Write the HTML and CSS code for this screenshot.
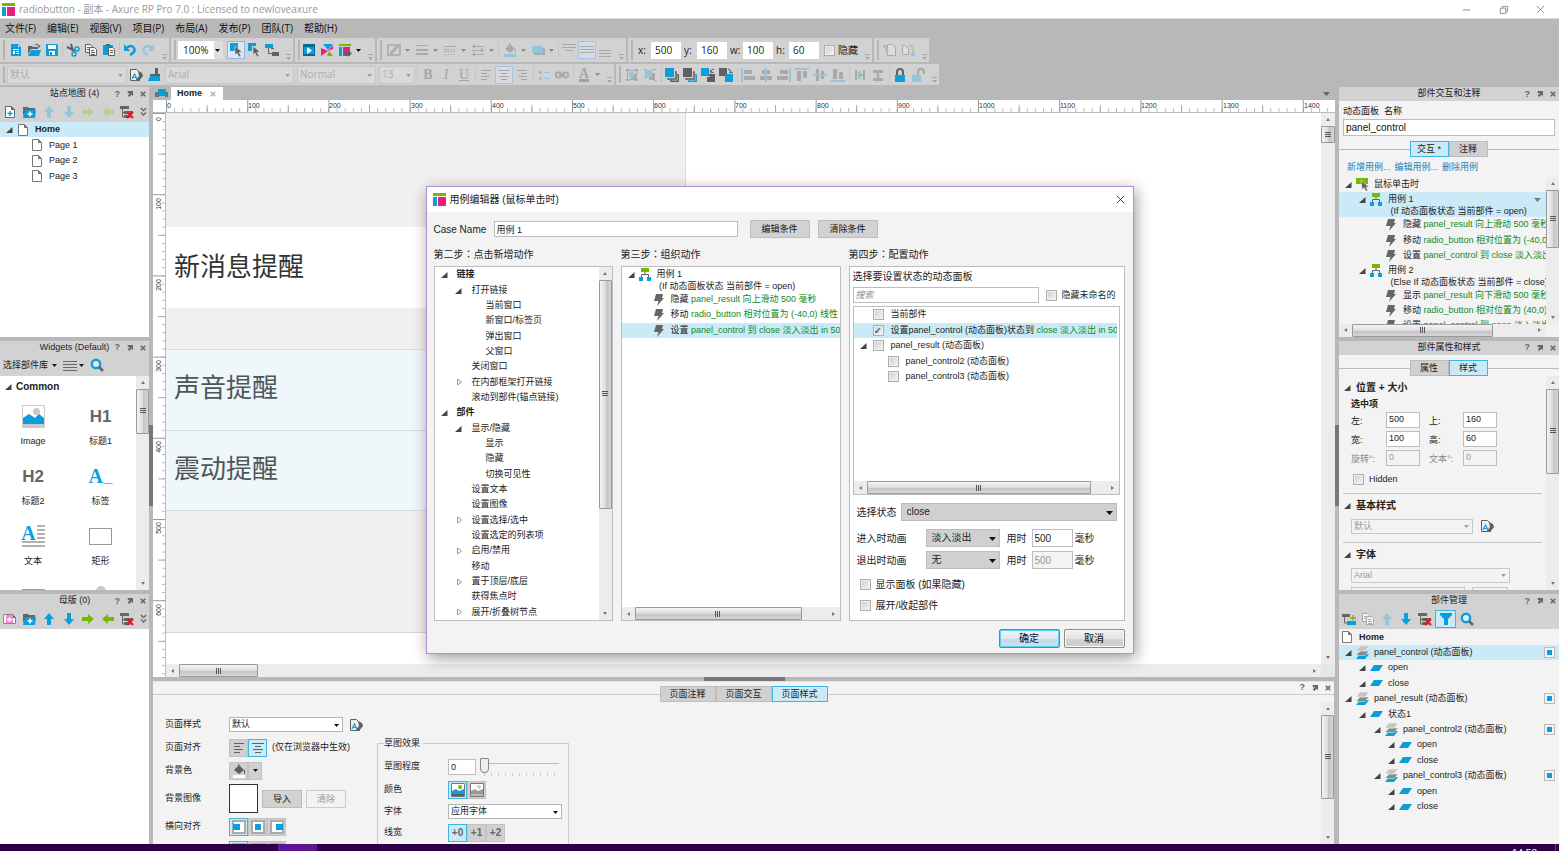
FILE: index.html
```html
<!DOCTYPE html>
<html lang="zh-CN">
<head>
<meta charset="utf-8">
<title>radiobutton - 副本 - Axure RP Pro 7.0</title>
<link rel="stylesheet" href="styles.css">
</head>
<body>
<svg class="sprite" aria-hidden="true">
  <symbol id="logo" viewBox="0 0 13 13"><path fill="#76b900" d="M0 0h13v3H0z"/><path fill="#0a9fdc" d="M0 4h4v9H0z"/><path fill="#ef1a86" d="M5 4h8v9H5z"/></symbol>
  <symbol id="new" viewBox="0 0 14 14"><path fill="var(--b)" d="M2 1h7l3 3v9H2z"/><path fill="#fff" d="M4 6h6v1H4zM4 8h2v3H4zM7 8h3v1H7zM7 10h3v1H7zM9 2l2 2H9z"/></symbol>
  <symbol id="open" viewBox="0 0 14 14"><path fill="var(--g)" d="M1 3h4l1 1h5v2H4l-3 5z"/><path fill="var(--b)" d="M4 7h10l-2 6H1z"/><path fill="none" stroke="var(--g)" d="M8 2q3-2 4 1"/><path fill="var(--g)" d="M10.500 2.500h3L12 5z"/></symbol>
  <symbol id="save" viewBox="0 0 14 14"><path fill="var(--b)" d="M1 1h11l1 1v11H1z"/><path fill="#fff" d="M3 2h8v4H3zM4 8h6v4H4z"/><path fill="var(--b)" d="M5 9h2v3H5z"/></symbol>
  <symbol id="cut" viewBox="0 0 14 14"><path stroke="var(--g)" stroke-width="2" fill="none" d="M1 4l8 4M5 1l2 7"/><g fill="none" stroke="var(--b)" stroke-width="1.500"><circle cx="11" cy="6" r="2"/><circle cx="8" cy="11" r="2"/></g></symbol>
  <symbol id="copy" viewBox="0 0 14 14"><g fill="#f3f3f3" stroke="var(--g)"><path d="M1.500 1.500h5l2 2v6h-7z"/><path d="M5.500 4.500h5l2 2v6h-7z"/></g><path stroke="var(--g)" d="M7 7.500h3M7 9.500h4M7 11.500h4M3 4.500h2M3 6.500h2"/></symbol>
  <symbol id="paste" viewBox="0 0 14 14"><path fill="var(--b)" d="M1 2h10v10H1z"/><path fill="var(--g)" d="M4 1h4v2H4z"/><path fill="#f3f3f3" stroke="var(--g)" d="M6.500 4.500h4l2 2v6h-6z"/><path stroke="var(--g)" d="M8 7.500h3M8 9.500h3"/></symbol>
  <symbol id="undo" viewBox="0 0 14 14"><path fill="none" stroke="var(--b)" stroke-width="2.500" d="M3 5q6-4 8 0t-4 7"/><path fill="var(--b)" d="M1 1v7h6z"/></symbol>
  <symbol id="redo" viewBox="0 0 14 14"><path fill="none" stroke="var(--b)" stroke-width="2.500" d="M11 5Q5 1 3 5t4 7"/><path fill="var(--b)" d="M13 1v7H7z"/></symbol>
  <symbol id="caret" viewBox="0 0 7 4"><path d="M0 0h7L3.500 4z"/></symbol>
  <symbol id="more" viewBox="0 0 6 6"><path fill="#a5a5a5" d="M1 0h5v1H1zM1 3h5L3.500 6z"/></symbol>
  <symbol id="pointer" viewBox="0 0 14 14"><path fill="var(--b)" d="M1 0h8v8H1z"/><path fill="var(--g)" stroke="#e0e0e0" stroke-width=".6" d="M6 3l7 6-3 .300 2 3.700-2 1-2-4-2 2z"/></symbol>
  <symbol id="pointer2" viewBox="0 0 14 14"><path fill="var(--b)" d="M1 0h8v3H5v5H1z"/><path fill="var(--g)" stroke="#e0e0e0" stroke-width=".6" d="M6 3l7 6-3 .300 2 3.700-2 1-2-4-2 2z"/></symbol>
  <symbol id="connector" viewBox="0 0 14 14"><path fill="var(--b)" d="M0 1h8v4H0z"/><path fill="none" stroke="var(--g)" d="M3.500 5v5.500H7M6 5.500h3"/><path fill="var(--g)" d="M7 9h7v4H7z"/></symbol>
  <symbol id="play" viewBox="0 0 14 14"><path fill="#056a93" d="M1 1h12v12H1z"/><path fill="var(--b)" d="M2 4h10v7H2z"/><path fill="#fff" d="M5 4l5 3.500L5 11z"/></symbol>
  <symbol id="share" viewBox="0 0 14 14"><path fill="var(--b)" d="M3 1h10l-5 6z"/><path fill="#ef1a86" d="M1 5l7 3-7 5z"/><path fill="#76b900" d="M9 8l4 5H7z"/><path fill="#ef1a86" d="M8 8l5-6v4z"/></symbol>
  <symbol id="publish" viewBox="0 0 14 14"><path fill="#76b900" d="M1 1h12v2H1z"/><path fill="var(--b)" d="M1 4h3v9H1z"/><path fill="#ef1a86" d="M5 4h7v9H5z"/><path fill="var(--g)" d="M6 9h4V7l4 3.500-4 3.500v-2H6z"/></symbol>
  <symbol id="pen" viewBox="0 0 14 14"><path fill="none" stroke="var(--g)" stroke-width="1.500" d="M1 2h12v10H1z"/><path stroke="var(--g)" stroke-width="2.500" d="M4 10l7-7"/><path fill="var(--g)" d="M2 12l2-3 2 2z"/></symbol>
  <symbol id="lines" viewBox="0 0 14 14"><path fill="var(--g)" d="M1 2h12v1H1zM1 6h12v2H1zM1 10h12v2H1z"/></symbol>
  <symbol id="dashes" viewBox="0 0 14 14"><path fill="none" stroke="var(--g)" d="M1 3.500h12"/><path fill="none" stroke="var(--g)" stroke-dasharray="2 1" d="M1 6.500h12M1 8.500h12"/><path fill="none" stroke="var(--g)" stroke-dasharray="1 1" d="M1 11.500h12"/></symbol>
  <symbol id="arrows" viewBox="0 0 14 14"><path stroke="var(--g)" d="M2 3.500h11M1 7.500h11M2 11.500h11"/><path fill="var(--g)" d="M4 1v5L1 3.500zM10 5v5l3-2.500zM4 9v5l-3-2.500z"/></symbol>
  <symbol id="fill" viewBox="0 0 14 14"><path fill="var(--g)" d="M7 1l5 5-5 4-5-4z"/><path stroke="var(--g)" fill="none" d="M6.500 0v5M12.500 6v4"/><path fill="var(--fill,var(--b))" d="M1 11h12v3H1z"/></symbol>
  <symbol id="shade" viewBox="0 0 14 14"><path fill="#aaa" d="M3 5h11v7H3z"/><path fill="var(--b)" d="M1 3h11v7H1z"/></symbol>
  <symbol id="vtop" viewBox="0 0 14 14"><path fill="var(--g)" d="M0 1h14v1H0zM0 4h14v1H0zM3 7h8v1H3z"/></symbol>
  <symbol id="vmid" viewBox="0 0 14 14"><path fill="var(--g)" d="M0 3h14v1H0zM0 6h14v1H0zM0 9h14v1H0z"/></symbol>
  <symbol id="vbot" viewBox="0 0 14 14"><path fill="var(--g)" d="M1 7h12v1H1zM1 10h12v1H1zM1 13h12v1H1z"/></symbol>
  <symbol id="cin" viewBox="0 0 14 14"><path fill="#ddd" stroke="var(--g)" d="M4.500 1.500h5l3 3v8h-8z"/><path fill="var(--b)" d="M0 2h4v4h2l-3 4-1-5H0z"/></symbol>
  <symbol id="cout" viewBox="0 0 14 14"><path fill="#ddd" stroke="var(--g)" d="M1.500 2.500h3l3 3v6h-6z"/><path stroke="#b9cc83" stroke-width="2" fill="none" d="M8 2q4 0 4 6"/><path fill="var(--b)" d="M12 8l2.500 3L12 14l-2.500-3z"/></symbol>
  <symbol id="styleedit" viewBox="0 0 14 14"><path fill="#eee" stroke="var(--g)" d="M1.500 1.500h6l3 3v8h-9z"/><path fill="var(--g)" d="M9 3l4 2 1 3-4 5H6l4-5z"/><path fill="none" stroke="#0a9fdc" stroke-width="1.200" d="M3 11l2.500-5L8 11M4 9.500h3"/></symbol>
  <symbol id="brush" viewBox="0 0 14 14"><path fill="var(--g)" d="M8 0h3v6H8zM3 6h10v2H3z"/><path fill="#0a9fdc" d="M3 8h10v5H1z"/></symbol>
  <symbol id="aleft" viewBox="0 0 14 14"><path fill="var(--g)" d="M2 2h10v1H2zM2 5h6v1H2zM2 8h9v1H2zM2 11h6v1H2z"/></symbol>
  <symbol id="acenter" viewBox="0 0 14 14"><path fill="var(--g)" d="M1 2h12v1H1zM4 5h6v1H4zM2 8h10v1H2zM4 11h6v1H4z"/></symbol>
  <symbol id="aright" viewBox="0 0 14 14"><path fill="var(--g)" d="M2 2h10v1H2zM6 5h6v1H6zM3 8h9v1H3zM6 11h6v1H6z"/></symbol>
  <symbol id="bullets" viewBox="0 0 14 14"><path fill="var(--b)" d="M2 3h3v3H2zM2 9h3v3H2z"/><path fill="var(--b)" d="M7 4h6v1H7zM7 10h6v1H7z"/></symbol>
  <symbol id="link" viewBox="0 0 14 14"><g fill="none" stroke="var(--g)" stroke-width="2"><rect x="1" y="4.500" width="5" height="5" rx="2"/><rect x="8" y="4.500" width="5" height="5" rx="2"/><path d="M4 7h6"/></g></symbol>
  <symbol id="group" viewBox="0 0 14 14"><path fill="none" stroke="var(--g)" d="M2.500 2.500h9v9h-9z"/><path fill="var(--b)" d="M4 4h5v5H4z"/><path fill="var(--g)" d="M9 6v3H6v2h5V6zM1 1h3v2H1zM10 1h3v2h-3zM1 11h3v2H1zM10 11h3v2h-3z"/></symbol>
  <symbol id="ungroup" viewBox="0 0 14 14"><path fill="var(--b)" d="M2 2h7v7H2z"/><path fill="var(--g)" d="M9 5h3v7H6V9h3zM1 1h3v1H1zM9 1h4v1H9zM1 9h3v1H1zM11 12h3v1h-3z"/></symbol>
  <symbol id="front" viewBox="0 0 14 14"><path fill="var(--b)" d="M0 0h9v9H0z"/><path fill="none" stroke="var(--g)" stroke-width="1.500" d="M10 4h1v7H3v-1M12 7h1.200v6.200H6v-1.200"/></symbol>
  <symbol id="back" viewBox="0 0 14 14"><path fill="var(--g)" d="M0 0h9v9H0z"/><path fill="none" stroke="var(--g)" stroke-width="1.500" d="M10 4h1v7H3v-1"/><path fill="none" stroke="var(--b)" stroke-width="1.500" d="M12 7h1.200v6.200H6v-1.200"/></symbol>
  <symbol id="fwd" viewBox="0 0 14 14"><path fill="var(--b)" d="M0 0h8v8H0z"/><path fill="var(--g)" d="M7 6h7v8H6V9h3z"/><path stroke="var(--g)" fill="none" d="M13 1q-3 0-3 3M9 2l1 3 3-1"/></symbol>
  <symbol id="bwd" viewBox="0 0 14 14"><path fill="var(--g)" d="M0 0h8v8H0z"/><path fill="var(--b)" d="M6 6h8v8H6z"/><path stroke="var(--g)" fill="none" d="M9 1q3 0 3 4M10 4l2 1 2-1"/></symbol>
  <symbol id="alL" viewBox="0 0 14 14"><path fill="var(--b)" d="M0 0h2v14H0z"/><path fill="var(--g)" d="M3 2h8v4H3zM3 8h11v4H3z"/></symbol>
  <symbol id="alC" viewBox="0 0 14 14"><path fill="var(--g)" d="M3 2h8v4H3zM1 8h12v4H1z"/><path fill="var(--b)" d="M6 0h2v14H6z"/></symbol>
  <symbol id="alR" viewBox="0 0 14 14"><path fill="var(--b)" d="M12 0h2v14h-2z"/><path fill="var(--g)" d="M3 2h8v4H3zM0 8h11v4H0z"/></symbol>
  <symbol id="alT" viewBox="0 0 14 14"><path fill="var(--b)" d="M0 0h14v2H0z"/><path fill="var(--g)" d="M2 3h4v10H2zM8 3h4v7H8z"/></symbol>
  <symbol id="alM" viewBox="0 0 14 14"><path fill="var(--g)" d="M3 1h3v12H3zM8 3h3v8H8z"/><path fill="var(--b)" d="M0 6h14v2H0z"/></symbol>
  <symbol id="alB" viewBox="0 0 14 14"><path fill="var(--b)" d="M0 12h14v2H0z"/><path fill="var(--g)" d="M2 1h4v10H2zM8 4h4v7H8z"/></symbol>
  <symbol id="diH" viewBox="0 0 14 14"><path fill="var(--g)" d="M2 2h2v10H2zM10 2h2v10h-2zM5 4h2v6H5zM7 6h4v2H7z"/><path fill="var(--b)" d="M6 3h2v8H6z"/></symbol>
  <symbol id="diV" viewBox="0 0 14 14"><path fill="var(--g)" d="M2 2h10v3H2zM2 10h10v3H2zM6 4h2v8H6z"/><path fill="var(--b)" d="M4 7h6v1H4z"/></symbol>
  <symbol id="lock" viewBox="0 0 14 14"><path fill="none" stroke="var(--g)" stroke-width="2" d="M4 7V4q0-3 3-3t3 3v3"/><path fill="var(--b)" d="M2 7h10v7H2z"/></symbol>
  <symbol id="unlock" viewBox="0 0 14 14"><path fill="none" stroke="var(--g)" stroke-width="2" d="M7 7V4q0-3 3-3t3 3v2"/><path fill="var(--b)" d="M1 7h9v7H1z"/></symbol>
  <symbol id="pop" viewBox="0 0 8 8"><path fill="#666" d="M1 0h7v7L6 5 3 8 1 6l3-3H1z"/></symbol>
  <symbol id="x" viewBox="0 0 8 8"><path stroke="#666" stroke-width="2" d="M1 1l6 6M7 1L1 7"/></symbol>
  <symbol id="addpage" viewBox="0 0 14 14"><path fill="#fff" stroke="#666" d="M2.500 1.500h6l3 3v8h-9z"/><path fill="#666" d="M8 1l4 4H8z"/><path stroke="#0a9fdc" stroke-width="1.500" d="M4.500 8.500h5M7 6v5"/></symbol>
  <symbol id="addmaster" viewBox="0 0 14 14"><path fill="#fff" stroke="#888" d="M.500 2.500h9l3 3v6H.500z"/><path fill="#666" d="M9 2l4 4H9z"/><path fill="#f48ad0" d="M3 3h7v8H3z"/><path stroke="#fff" stroke-width="1.500" d="M4 7.500h5M6.500 5v5"/></symbol>
  <symbol id="addfolder" viewBox="0 0 14 14"><path fill="#666" d="M1 2h5l1 1h6v3H1z"/><path fill="#0a9fdc" d="M3 5h11l-1 8H1z"/><path fill="#666" d="M1 4h2v3L1 11z"/><path stroke="#fff" stroke-width="1.500" d="M5.500 9h5M8 6.500v5"/></symbol>
  <symbol id="up" viewBox="0 0 14 14"><path fill="var(--b)" d="M7 1l5 6H9v6H5V7H2z"/></symbol>
  <symbol id="down" viewBox="0 0 14 14"><path fill="var(--b)" d="M7 13l5-6H9V1H5v6H2z"/></symbol>
  <symbol id="right" viewBox="0 0 14 14"><path fill="var(--n)" d="M13 7L7 2v3H1v4h6v3z"/></symbol>
  <symbol id="left" viewBox="0 0 14 14"><path fill="var(--n)" d="M1 7l6-5v3h6v4H7v3z"/></symbol>
  <symbol id="deltree" viewBox="0 0 14 14"><path fill="#666" d="M0 1h9v3H0zM4 6h9v3H4zM4 10h6v3H4z"/><path fill="none" stroke="#666" d="M2.500 4v8H5M2 7.500h3"/><path stroke="#e01b22" stroke-width="2.200" d="M7 7l6 6M13 7l-6 6"/></symbol>
  <symbol id="chev" viewBox="0 0 8 10"><path fill="none" stroke="#666" stroke-width="1.600" d="M1 1l3 3 3-3M1 6l3 3 3-3"/></symbol>
  <symbol id="page" viewBox="0 0 10 12"><path fill="#fff" stroke="#777" d="M.500.500h6l3 3v8h-9z"/><path fill="#777" d="M6 0l4 4H6z"/></symbol>
  <symbol id="tri" viewBox="0 0 7 7"><path fill="#444" d="M6.500 1v6H0z"/></symbol>
  <symbol id="tric" viewBox="0 0 7 8"><path fill="#fff" stroke="#999" d="M1.500 1l4 3-4 3z"/></symbol>
  <symbol id="case" viewBox="0 0 12 13"><path fill="#76b900" d="M2 0h8v4H2z"/><path fill="none" stroke="#666" d="M6 4v3M2.500 9V6.500h7V9"/><path fill="#0a9fdc" d="M0 9h4v4H0zM8 9h4v4H8z"/></symbol>
  <symbol id="click" viewBox="0 0 13 13"><path fill="#76b900" d="M0 0h12v6H0z"/><path fill="#666" stroke="#f3f3f3" stroke-width=".6" d="M5 2l8 7-3 .300 2 3-2 1-2-3.500-2 2z"/></symbol>
  <symbol id="bolt" viewBox="0 0 10 12"><path fill="#666" d="M2 0h7L8 4h2L3 12l1.500-5H0z"/></symbol>
  <symbol id="search" viewBox="0 0 14 14"><circle cx="6" cy="6" r="4.200" fill="#fff" fill-opacity=".5" stroke="#0a9fdc" stroke-width="2.400"/><path stroke="#666" stroke-width="2.600" d="M9 9l4 4"/></symbol>
  <symbol id="menu" viewBox="0 0 14 14"><path fill="#666" d="M0 3h14v1H0zM0 6h14v1H0zM0 9h14v1H0zM0 12h14v1H0z"/></symbol>
  <symbol id="adddiag" viewBox="0 0 14 14"><path fill="#666" d="M0 2h8v3H0z"/><path fill="none" stroke="#666" d="M2.500 5v6H5"/><path fill="#0a9fdc" d="M5 9h9v4H5z"/><path stroke="#76b900" stroke-width="1.500" d="M8 6h6M11 3v5"/></symbol>
  <symbol id="funnel" viewBox="0 0 14 14"><path fill="#0a9fdc" d="M1 1h12v2L9 7v6H5V7L1 3z"/></symbol>
  <symbol id="stack" viewBox="0 0 13 13"><path fill="#0a9fdc" d="M4 8h9l-4 5H0z"/><path fill="#888" d="M4 5h9L9 9.500H0z" stroke="#f3f3f3" stroke-width=".5"/><path fill="#c4c4c4" d="M4 0h9L9 5H0z" stroke="#f3f3f3" stroke-width=".5"/></symbol>
  <symbol id="state" viewBox="0 0 13 6"><path fill="#0a9fdc" d="M4 0h9L9 6H0z"/></symbol>
  <symbol id="diagram" viewBox="0 0 13 10"><path fill="#0a9fdc" d="M3 0h8v7H3z"/><path fill="#4e7f94" d="M0 3h4v5H0zM10 3h3v5h-3z"/></symbol>
  <symbol id="image" viewBox="0 0 23 23"><path fill="#fff" stroke="#c9c9c9" d="M.500.500h22v22H.500z"/><circle cx="14.500" cy="6.500" r="3.500" fill="#c9c9c9"/><path fill="#0a9fdc" d="M1 13l6-4 6 4 4-4 5 4v6H1z"/><path fill="#c9c9c9" d="M1 19h21v4H1z"/></symbol>
  <symbol id="para" viewBox="0 0 23 22"><path fill="#666" d="M15 0h8v1h-8zM15 4h8v1h-8zM15 8h8v1h-8zM15 12h8v1h-8zM0 16h23v1H0zM0 20h23v1H0z"/></symbol>
  <symbol id="pic" viewBox="0 0 14 14"><path fill="#fff" stroke="#777" d="M.500.500h13v13H.500z"/><circle cx="9" cy="4" r="2" fill="var(--n)"/><path fill="var(--b)" d="M1 8l4-2 3 2 5-2v5H1z"/><path fill="var(--g)" d="M1 11h12v2H1z"/></symbol>
  <symbol id="posl" viewBox="0 0 14 14"><path fill="#fff" stroke="#aaa" stroke-width="2" d="M1 1h12v12H1z"/><path fill="#0a9fdc" d="M1 4h7v6H1z"/></symbol>
  <symbol id="posc" viewBox="0 0 14 14"><path fill="#fff" stroke="#aaa" stroke-width="2" d="M1 1h12v12H1z"/><path fill="#0a9fdc" d="M4 4h6v6H4z"/></symbol>
  <symbol id="posr" viewBox="0 0 14 14"><path fill="#fff" stroke="#aaa" stroke-width="2" d="M1 1h12v12H1z"/><path fill="#0a9fdc" d="M6 4h7v6H6z"/></symbol>
</svg>

<header class="titlebar">
  <svg class="i13"><use href="#logo"/></svg>
  <h1>radiobutton - 副本 - Axure RP Pro 7.0 : Licensed to newloveaxure</h1>
  <div class="wincontrols">
    <button aria-label="最小化"><svg viewBox="0 0 10 10"><path d="M1 5.500h8"/></svg></button>
    <button aria-label="还原"><svg viewBox="0 0 10 10"><path d="M1.500 3.500h6v6h-6zM3.500 3V1.500h6v6H8"/></svg></button>
    <button aria-label="关闭"><svg viewBox="0 0 10 10"><path d="M1 1l8 8M9 1L1 9"/></svg></button>
  </div>
</header>
<nav class="menubar">
  <button>文件(F)</button><button>编辑(E)</button><button>视图(V)</button><button>项目(P)</button><button>布局(A)</button><button>发布(P)</button><button>团队(T)</button><button>帮助(H)</button>
</nav>
<div class="toolbars">
  <div class="toolrow">
    <div class="tools">
      <i class="grip"></i>
      <button aria-label="新建"><svg><use href="#new"/></svg></button><button aria-label="打开"><svg><use href="#open"/></svg></button><button aria-label="保存"><svg><use href="#save"/></svg></button>
      <i class="sep"></i>
      <button aria-label="剪切"><svg><use href="#cut"/></svg></button><button aria-label="复制"><svg><use href="#copy"/></svg></button><button aria-label="粘贴"><svg><use href="#paste"/></svg></button>
      <i class="sep"></i>
      <button aria-label="撤销"><svg><use href="#undo"/></svg></button><button class="off" aria-label="重做"><svg><use href="#redo"/></svg></button>
      <svg class="more"><use href="#more"/></svg>
    </div>
    <div class="tools">
      <i class="grip"></i>
      <span class="select zoomsel"><select aria-label="缩放"><option>100%</option></select><svg class="caret"><use href="#caret"/></svg></span>
      <button class="on" aria-label="选择"><svg><use href="#pointer"/></svg></button><button aria-label="包含选择"><svg><use href="#pointer2"/></svg></button><button aria-label="连接"><svg><use href="#connector"/></svg></button>
      <svg class="more"><use href="#more"/></svg>
    </div>
    <div class="tools tight">
      <i class="grip"></i>
      <button aria-label="预览"><svg><use href="#play"/></svg></button><button aria-label="分享"><svg><use href="#share"/></svg></button><button aria-label="发布"><svg><use href="#publish"/></svg></button>
      <svg class="caret"><use href="#caret"/></svg>
      <svg class="more"><use href="#more"/></svg>
    </div>
    <div class="tools off wide">
      <i class="grip"></i>
      <button aria-label="线条颜色"><svg><use href="#pen"/></svg></button><svg class="caret"><use href="#caret"/></svg>
      <button aria-label="线宽"><svg><use href="#lines"/></svg></button><svg class="caret"><use href="#caret"/></svg>
      <button aria-label="线型"><svg><use href="#dashes"/></svg></button><svg class="caret"><use href="#caret"/></svg>
      <button aria-label="箭头"><svg><use href="#arrows"/></svg></button><svg class="caret"><use href="#caret"/></svg>
      <i class="sep"></i>
      <button aria-label="填充"><svg><use href="#fill"/></svg></button><svg class="caret"><use href="#caret"/></svg>
      <button aria-label="阴影"><svg><use href="#shade"/></svg></button><svg class="caret"><use href="#caret"/></svg>
      <i class="sep"></i>
      <button aria-label="顶部对齐"><svg><use href="#vtop"/></svg></button><button class="on" aria-label="居中"><svg><use href="#vmid"/></svg></button><button aria-label="底部对齐"><svg><use href="#vbot"/></svg></button>
      <svg class="more"><use href="#more"/></svg>
    </div>
    <div class="tools coords">
      <i class="grip"></i>
      <label for="cx">x:</label><input id="cx" value="500">
      <label for="cy">y:</label><input id="cy" value="160">
      <label for="cw">w:</label><input id="cw" value="100">
      <label for="ch">h:</label><input id="ch" value="60">
      <label class="check"><input type="checkbox">隐藏</label>
      <svg class="more"><use href="#more"/></svg>
    </div>
    <div class="tools off">
      <i class="grip"></i>
      <button aria-label="签入"><svg><use href="#cin"/></svg></button><button aria-label="签出"><svg><use href="#cout"/></svg></button>
      <svg class="more"><use href="#more"/></svg>
    </div>
  </div>
  <div class="toolrow second">
    <div class="tools">
      <i class="grip"></i>
      <span class="select faded w120"><select aria-label="样式" disabled><option>默认</option></select><svg class="caret"><use href="#caret"/></svg></span>
      <button aria-label="编辑样式"><svg><use href="#styleedit"/></svg></button><button class="brush" aria-label="格式刷"><svg><use href="#brush"/></svg></button>
      <span class="select faded w129"><select aria-label="字体" disabled><option>Arial</option></select><svg class="caret"><use href="#caret"/></svg></span>
      <span class="select faded w79"><select aria-label="字形" disabled><option>Normal</option></select><svg class="caret"><use href="#caret"/></svg></span>
      <span class="select faded w36"><select aria-label="字号" disabled><option>13</option></select><svg class="caret"><use href="#caret"/></svg></span>
      <i class="sep"></i>
      <button class="off glyph"><b>B</b></button><button class="off glyph"><em>I</em></button><button class="off glyph"><u>U</u></button>
      <i class="sep"></i>
      <button class="off" aria-label="左对齐"><svg><use href="#aleft"/></svg></button><button class="off on" aria-label="居中对齐"><svg><use href="#acenter"/></svg></button><button class="off" aria-label="右对齐"><svg><use href="#aright"/></svg></button>
      <i class="sep"></i>
      <button class="off" aria-label="列表"><svg><use href="#bullets"/></svg></button><button class="off" aria-label="链接"><svg><use href="#link"/></svg></button>
      <i class="sep"></i>
      <button class="off glyph color"><b>A</b></button><svg class="caret"><use href="#caret"/></svg>
      <svg class="more"><use href="#more"/></svg>
    </div>
    <div class="tools">
      <i class="grip"></i>
      <button class="off" aria-label="组合"><svg><use href="#group"/></svg></button><button class="off" aria-label="取消组合"><svg><use href="#ungroup"/></svg></button>
      <i class="sep"></i>
      <button aria-label="置于顶层"><svg><use href="#front"/></svg></button><button aria-label="置于底层"><svg><use href="#back"/></svg></button><button aria-label="上移一层"><svg><use href="#fwd"/></svg></button><button aria-label="下移一层"><svg><use href="#bwd"/></svg></button>
      <i class="sep"></i>
      <button class="off" aria-label="左侧对齐"><svg><use href="#alL"/></svg></button><button class="off" aria-label="水平居中"><svg><use href="#alC"/></svg></button><button class="off" aria-label="右侧对齐"><svg><use href="#alR"/></svg></button><button class="off" aria-label="顶端对齐"><svg><use href="#alT"/></svg></button><button class="off" aria-label="垂直居中"><svg><use href="#alM"/></svg></button><button class="off" aria-label="底端对齐"><svg><use href="#alB"/></svg></button>
      <i class="sep"></i>
      <button class="off" aria-label="水平分布"><svg><use href="#diH"/></svg></button><button class="off" aria-label="垂直分布"><svg><use href="#diV"/></svg></button>
      <i class="sep"></i>
      <button aria-label="锁定"><svg><use href="#lock"/></svg></button><button class="off" aria-label="解锁"><svg><use href="#unlock"/></svg></button>
      <svg class="more"><use href="#more"/></svg>
    </div>
  </div>
</div>

<main class="workspace">
  <aside class="side">
    <section class="panel">
      <header class="phead"><h2>站点地图 (4)</h2><span class="pbtns"><button aria-label="帮助">?</button><button aria-label="弹出"><svg><use href="#pop"/></svg></button><button aria-label="关闭"><svg><use href="#x"/></svg></button></span></header>
      <div class="pbar">
        <button aria-label="新增页面"><svg><use href="#addpage"/></svg></button><button aria-label="新增文件夹"><svg><use href="#addfolder"/></svg></button><button class="off" aria-label="上移"><svg><use href="#up"/></svg></button><button class="off" aria-label="下移"><svg><use href="#down"/></svg></button><button class="off" aria-label="降级"><svg><use href="#right"/></svg></button><button class="off" aria-label="升级"><svg><use href="#left"/></svg></button><button aria-label="删除"><svg><use href="#deltree"/></svg></button><button class="chev" aria-label="更多"><svg><use href="#chev"/></svg></button>
      </div>
      <ul class="tree pages">
        <li class="sel"><svg class="tri"><use href="#tri"/></svg><svg class="page"><use href="#page"/></svg><b>Home</b></li>
        <li class="l2"><svg class="page"><use href="#page"/></svg>Page 1</li>
        <li class="l2"><svg class="page"><use href="#page"/></svg>Page 2</li>
        <li class="l2"><svg class="page"><use href="#page"/></svg>Page 3</li>
      </ul>
    </section>
    <section class="panel">
      <header class="phead"><h2>Widgets (Default)</h2><span class="pbtns"><button aria-label="帮助">?</button><button aria-label="弹出"><svg><use href="#pop"/></svg></button><button aria-label="关闭"><svg><use href="#x"/></svg></button></span></header>
      <div class="pbar lib">
        <button class="text">选择部件库<svg class="caret"><use href="#caret"/></svg></button><button class="text" aria-label="选项"><svg class="i14"><use href="#menu"/></svg><svg class="caret"><use href="#caret"/></svg></button><button class="text" aria-label="搜索"><svg class="i14"><use href="#search"/></svg></button>
      </div>
      <div class="scroller white">
        <div class="widgets">
          <h3><svg class="tri"><use href="#tri"/></svg>Common</h3>
          <ul>
            <li><span class="pic"><svg class="big"><use href="#image"/></svg></span>Image</li>
            <li><span class="pic">H1</span>标题1</li>
            <li><span class="pic">H2</span>标题2</li>
            <li><span class="pic serif"><b>A</b>_</span>标签</li>
            <li><span class="pic serif para"><b>A</b><svg class="big"><use href="#para"/></svg></span>文本</li>
            <li><span class="pic"><i class="rect"></i></span>矩形</li>
            <li class="cut"><i class="rect"></i></li>
            <li class="cut"><i class="round"></i></li>
          </ul>
        </div>
        <div class="sb v"><i class="ar up"></i><div class="track"><i class="thumb p24"></i></div><i class="ar dn"></i></div>
      </div>
    </section>
    <section class="panel">
      <header class="phead"><h2>母版 (0)</h2><span class="pbtns"><button aria-label="帮助">?</button><button aria-label="弹出"><svg><use href="#pop"/></svg></button><button aria-label="关闭"><svg><use href="#x"/></svg></button></span></header>
      <div class="pbar">
        <button aria-label="新增母版"><svg><use href="#addmaster"/></svg></button><button aria-label="新增文件夹"><svg><use href="#addfolder"/></svg></button><button aria-label="上移"><svg><use href="#up"/></svg></button><button aria-label="下移"><svg><use href="#down"/></svg></button><button aria-label="降级"><svg><use href="#right"/></svg></button><button aria-label="升级"><svg><use href="#left"/></svg></button><button aria-label="删除"><svg><use href="#deltree"/></svg></button><button class="chev" aria-label="更多"><svg><use href="#chev"/></svg></button>
      </div>
      <div class="white fill"></div>
    </section>
  </aside>
  <div class="split"><i></i></div>

  <section class="center">
    <div class="tabstrip">
      <svg class="diagram"><use href="#diagram"/></svg>
      <span class="tab"><b>Home</b><button aria-label="关闭标签"><svg><use href="#x"/></svg></button></span>
      <svg class="caret"><use href="#caret"/></svg>
    </div>
    <svg class="hruler" role="img" aria-label="水平标尺">
      <defs>
        <pattern id="ht" x="13" width="8.120" height="13" patternUnits="userSpaceOnUse"><path stroke="#bbb" d="M.500 8v5"/></pattern>
        <pattern id="hm" x="53.600" width="81.200" height="13" patternUnits="userSpaceOnUse"><path stroke="#aaa" d="M.500 5v8"/></pattern>
        <pattern id="hb" x="13" width="81.200" height="13" patternUnits="userSpaceOnUse"><path stroke="#999" d="M.500 0v13"/></pattern>
      </defs>
      <rect x="13" width="100%" height="12" fill="url(#ht)"/><rect x="13" width="100%" height="12" fill="url(#hm)"/><rect x="13" width="100%" height="12" fill="url(#hb)"/>
      <path stroke="#bbb" d="M0 12.500h3000"/>
      <text x="14" y="8">0</text><text x="95" y="8">100</text><text x="176" y="8">200</text><text x="258" y="8">300</text><text x="339" y="8">400</text><text x="420" y="8">500</text><text x="501" y="8">600</text><text x="582" y="8">700</text><text x="664" y="8">800</text><text x="745" y="8">900</text><text x="826" y="8">1000</text><text x="907" y="8">1100</text><text x="988" y="8">1200</text><text x="1070" y="8">1300</text><text x="1151" y="8">1400</text>
    </svg>
    <div class="stage">
      <svg class="vruler" role="img" aria-label="垂直标尺">
        <defs>
          <pattern id="vt" width="13" height="8.120" patternUnits="userSpaceOnUse"><path stroke="#bbb" d="M9 .500h4"/></pattern>
          <pattern id="vm" y="40.600" width="13" height="81.200" patternUnits="userSpaceOnUse"><path stroke="#aaa" d="M5 .500h8"/></pattern>
          <pattern id="vb" width="13" height="81.200" patternUnits="userSpaceOnUse"><path stroke="#999" d="M0 .500h13"/></pattern>
        </defs>
        <rect width="12" height="100%" fill="url(#vt)"/><rect width="12" height="100%" fill="url(#vm)"/><rect width="12" height="100%" fill="url(#vb)"/>
        <path stroke="#bbb" d="M12.500 0v3000"/>
        <g text-anchor="middle"><text transform="translate(8 6) rotate(-90)">0</text><text transform="translate(8 91) rotate(-90)">100</text><text transform="translate(8 172) rotate(-90)">200</text><text transform="translate(8 253) rotate(-90)">300</text><text transform="translate(8 334) rotate(-90)">400</text><text transform="translate(8 415) rotate(-90)">500</text><text transform="translate(8 497) rotate(-90)">600</text></g>
      </svg>
      <div class="canvas">
        <div class="artboard">
          <div class="item first">新消息提醒</div>
          <div class="item blue">声音提醒</div>
          <div class="item blue">震动提醒</div>
        </div>
      </div>
      <div class="sb v"><i class="ar up"></i><div class="track"><i class="thumb p3"></i></div><i class="ar dn"></i></div>
      <div class="sb h"><i class="ar lt"></i><div class="track"><i class="thumb p7"></i></div><i class="ar rt"></i></div>
      <div class="corner"></div>
    </div>
    <div class="hsplit"><i></i></div>
    <section class="bottom">
      <div class="btabs">
        <div class="tabs"><button>页面注释</button><button>页面交互</button><button class="on">页面样式</button></div>
        <span class="pbtns"><button aria-label="帮助">?</button><button aria-label="弹出"><svg><use href="#pop"/></svg></button><button aria-label="关闭"><svg><use href="#x"/></svg></button></span>
      </div>
      <div class="scroller">
        <div class="bform">
          <div class="rows">
            <div class="row r23"><label for="ps">页面样式</label><span class="select w114"><select id="ps"><option>默认</option></select><svg class="caret"><use href="#caret"/></svg></span><button class="plain" aria-label="编辑样式"><svg class="i14"><use href="#styleedit"/></svg></button></div>
            <div class="row r23"><span class="lab">页面对齐</span><span class="seg"><button aria-label="左"><svg class="i14"><use href="#aleft"/></svg></button><button class="on" aria-label="中"><svg class="i14"><use href="#acenter"/></svg></button></span><span class="note">(仅在浏览器中生效)</span></div>
            <div class="row r23"><span class="lab">背景色</span><span class="seg bg"><button aria-label="背景色"><svg class="i14"><use href="#fill"/></svg></button><button class="dd" aria-label="选择颜色"><svg class="caret"><use href="#caret"/></svg></button></span></div>
            <div class="row r33"><span class="lab">背景图像</span><i class="swatch"></i><button class="btn">导入</button><button class="btn" disabled>清除</button></div>
            <div class="row r23"><span class="lab">横向对齐</span><span class="seg"><button class="on" aria-label="左"><svg class="i14"><use href="#posl"/></svg></button><button aria-label="中"><svg class="i14"><use href="#posc"/></svg></button><button aria-label="右"><svg class="i14"><use href="#posr"/></svg></button></span></div>
            <div class="row r23"><span class="lab"></span><span class="seg"><button class="on" aria-label="上"><svg class="i14"><use href="#posl"/></svg></button><button aria-label="中"><svg class="i14"><use href="#posc"/></svg></button><button aria-label="下"><svg class="i14"><use href="#posr"/></svg></button></span></div>
          </div>
          <fieldset>
            <legend>草图效果</legend>
            <div class="row r23"><label for="sk">草图程度</label><input id="sk" class="w28" value="0"><span class="slider"><input type="range" aria-label="草图程度" value="0"><i></i></span></div>
            <div class="row r23"><span class="lab">颜色</span><span class="seg"><button class="on" aria-label="彩色"><svg class="i14"><use href="#pic"/></svg></button><button class="gray" aria-label="黑白"><svg class="i14"><use href="#pic"/></svg></button></span></div>
            <div class="row r21"><label for="sf">字体</label><span class="select w114"><select id="sf"><option>应用字体</option></select><svg class="caret"><use href="#caret"/></svg></span></div>
            <div class="row r21"><span class="lab">线宽</span><span class="seg"><button class="on"><b>+0</b></button><button><b>+1</b></button><button><b>+2</b></button></span></div>
            <div class="row r21"></div>
          </fieldset>
        </div>
        <div class="sb v"><i class="ar up"></i><div class="track"><i class="thumb p72"></i></div><i class="ar dn"></i></div>
      </div>
    </section>
  </section>
  <div class="split"><i class="r"></i></div>

  <aside class="side">
    <section class="panel">
      <header class="phead"><h2>部件交互和注释</h2><span class="pbtns"><button aria-label="帮助">?</button><button aria-label="弹出"><svg><use href="#pop"/></svg></button><button aria-label="关闭"><svg><use href="#x"/></svg></button></span></header>
      <div class="namebox"><label for="pn">动态面板&nbsp; 名称</label><input id="pn" value="panel_control"></div>
      <div class="tabs line"><button class="on">交互 *</button><button>注释</button></div>
      <div class="links"><a href="#">新增用例...</a><a href="#">编辑用例...</a><a href="#">删除用例</a></div>
      <div class="scroller">
        <ul class="tree cases">
          <li><svg class="tri"><use href="#tri"/></svg><svg class="click"><use href="#click"/></svg>鼠标单击时</li>
          <li class="l1 two sel"><svg class="tri"><use href="#tri"/></svg><svg class="case"><use href="#case"/></svg><span>用例 1<br>&nbsp;(If 动态面板状态 当前部件 = open)</span><svg class="caret"><use href="#caret"/></svg></li>
          <li class="act"><svg class="bolt"><use href="#bolt"/></svg>隐藏&nbsp;<q>panel_result 向上滑动 500 毫秒</q></li>
          <li class="act"><svg class="bolt"><use href="#bolt"/></svg>移动&nbsp;<q>radio_button 相对位置为 (-40,0) 线性</q></li>
          <li class="act"><svg class="bolt"><use href="#bolt"/></svg>设置&nbsp;<q>panel_control 到 close 淡入淡出</q></li>
          <li class="l1 two"><svg class="tri"><use href="#tri"/></svg><svg class="case"><use href="#case"/></svg><span>用例 2<br>&nbsp;(Else If 动态面板状态 当前部件 = close)</span></li>
          <li class="act"><svg class="bolt"><use href="#bolt"/></svg>显示&nbsp;<q>panel_result 向下滑动 500 毫秒</q></li>
          <li class="act"><svg class="bolt"><use href="#bolt"/></svg>移动&nbsp;<q>radio_button 相对位置为 (40,0) 线性</q></li>
          <li class="act"><svg class="bolt"><use href="#bolt"/></svg>设置&nbsp;<q>panel_control 到 open 淡入淡出</q></li>
        </ul>
        <div class="sb v"><i class="ar up"></i><div class="track"><i class="thumb p48"></i></div><i class="ar dn"></i></div>
      </div>
      <div class="sb h short"><i class="ar lt"></i><div class="track"><i class="thumb p78"></i></div><i class="ar rt"></i></div>
    </section>
    <section class="panel">
      <header class="phead"><h2>部件属性和样式</h2><span class="pbtns"><button aria-label="帮助">?</button><button aria-label="弹出"><svg><use href="#pop"/></svg></button><button aria-label="关闭"><svg><use href="#x"/></svg></button></span></header>
      <div class="tabs line second"><button>属性</button><button class="on">样式</button></div>
      <div class="scroller">
        <div class="props">
          <h3><svg class="tri"><use href="#tri"/></svg>位置 + 大小</h3>
          <h4>选中项</h4>
          <div class="grid4">
            <label for="pl">左:</label><input id="pl" value="500"><label for="pt">上:</label><input id="pt" value="160">
            <label for="pw">宽:</label><input id="pw" value="100"><label for="ph">高:</label><input id="ph" value="60">
            <label class="dim" for="pr">旋转°:</label><input id="pr" value="0" disabled><label class="dim" for="px">文本°:</label><input id="px" value="0" disabled>
          </div>
          <label class="check hid"><input type="checkbox">Hidden</label>
          <hr>
          <h3><svg class="tri"><use href="#tri"/></svg>基本样式</h3>
          <div class="line1"><span class="select pale w122"><select aria-label="基本样式" disabled><option>默认</option></select><svg class="caret"><use href="#caret"/></svg></span><button class="plain" aria-label="编辑样式"><svg class="i14"><use href="#styleedit"/></svg></button></div>
          <hr>
          <h3><svg class="tri"><use href="#tri"/></svg>字体</h3>
          <div class="line1"><span class="select pale w159"><select aria-label="字体" disabled><option>Arial</option></select><svg class="caret"><use href="#caret"/></svg></span></div>
          <div class="line1"><span class="select pale w114"><select aria-label="字形" disabled><option></option></select></span><span class="select pale w36"><select aria-label="字号" disabled><option></option></select></span></div>
        </div>
        <div class="sb v"><i class="ar up"></i><div class="track"><i class="thumb p45"></i></div><i class="ar dn"></i></div>
      </div>
    </section>
    <section class="panel">
      <header class="phead"><h2>部件管理</h2><span class="pbtns"><button aria-label="帮助">?</button><button aria-label="弹出"><svg><use href="#pop"/></svg></button><button aria-label="关闭"><svg><use href="#x"/></svg></button></span></header>
      <div class="pbar mgr">
        <button aria-label="新增"><svg><use href="#adddiag"/></svg></button><button class="off" aria-label="复制"><svg><use href="#copy"/></svg></button><button class="off" aria-label="上移"><svg><use href="#up"/></svg></button><button aria-label="下移"><svg><use href="#down"/></svg></button><button aria-label="删除"><svg><use href="#deltree"/></svg></button><button class="on" aria-label="筛选"><svg><use href="#funnel"/></svg></button><button aria-label="搜索"><svg><use href="#search"/></svg></button>
      </div>
      <ul class="tree manager">
        <li class="root"><svg class="page"><use href="#page"/></svg><b>Home</b></li>
        <li class="sel"><svg class="tri"><use href="#tri"/></svg><svg class="stack"><use href="#stack"/></svg>panel_control (动态面板)<i class="vis"></i></li>
        <li class="l1"><svg class="tri"><use href="#tri"/></svg><svg class="state"><use href="#state"/></svg>open</li>
        <li class="l1"><svg class="tri"><use href="#tri"/></svg><svg class="state"><use href="#state"/></svg>close</li>
        <li><svg class="tri"><use href="#tri"/></svg><svg class="stack"><use href="#stack"/></svg>panel_result (动态面板)<i class="vis"></i></li>
        <li class="l1"><svg class="tri"><use href="#tri"/></svg><svg class="state"><use href="#state"/></svg>状态1</li>
        <li class="l2"><svg class="tri"><use href="#tri"/></svg><svg class="stack"><use href="#stack"/></svg>panel_control2 (动态面板)<i class="vis"></i></li>
        <li class="l3"><svg class="tri"><use href="#tri"/></svg><svg class="state"><use href="#state"/></svg>open</li>
        <li class="l3"><svg class="tri"><use href="#tri"/></svg><svg class="state"><use href="#state"/></svg>close</li>
        <li class="l2"><svg class="tri"><use href="#tri"/></svg><svg class="stack"><use href="#stack"/></svg>panel_control3 (动态面板)<i class="vis"></i></li>
        <li class="l3"><svg class="tri"><use href="#tri"/></svg><svg class="state"><use href="#state"/></svg>open</li>
        <li class="l3"><svg class="tri"><use href="#tri"/></svg><svg class="state"><use href="#state"/></svg>close</li>
      </ul>
    </section>
  </aside>
</main>
<footer class="taskbar"><i></i><time>14:58</time></footer>

<section class="dialog" role="dialog" aria-labelledby="dt">
  <header><svg class="i13"><use href="#logo"/></svg><h2 id="dt">用例编辑器 (鼠标单击时)</h2><button class="plain" aria-label="关闭"><svg viewBox="0 0 10 10"><path d="M1 1l8 8M9 1L1 9"/></svg></button></header>
  <div class="caserow"><label for="cn">Case Name</label><input id="cn" value="用例 1"><button class="btn">编辑条件</button><button class="btn">清除条件</button></div>
  <div class="steps">
    <div class="step"><h3>第二步<span class="colon" lang="zh-TW">：</span>点击新增动作</h3>
      <div class="box hor">
        <ul class="tree actions">
          <li><svg class="tri"><use href="#tri"/></svg><b>链接</b></li>
          <li class="l1"><svg class="tri"><use href="#tri"/></svg>打开链接</li>
          <li class="l3">当前窗口</li><li class="l3">新窗口/标签页</li><li class="l3">弹出窗口</li><li class="l3">父窗口</li>
          <li class="l2">关闭窗口</li>
          <li class="l1"><svg class="tric"><use href="#tric"/></svg>在内部框架打开链接</li>
          <li class="l2">滚动到部件(锚点链接)</li>
          <li><svg class="tri"><use href="#tri"/></svg><b>部件</b></li>
          <li class="l1"><svg class="tri"><use href="#tri"/></svg>显示/隐藏</li>
          <li class="l3">显示</li><li class="l3">隐藏</li><li class="l3">切换可见性</li>
          <li class="l2">设置文本</li><li class="l2">设置图像</li>
          <li class="l1"><svg class="tric"><use href="#tric"/></svg>设置选择/选中</li>
          <li class="l2">设置选定的列表项</li>
          <li class="l1"><svg class="tric"><use href="#tric"/></svg>启用/禁用</li>
          <li class="l2">移动</li>
          <li class="l1"><svg class="tric"><use href="#tric"/></svg>置于顶层/底层</li>
          <li class="l2">获得焦点时</li>
          <li class="l1"><svg class="tric"><use href="#tric"/></svg>展开/折叠树节点</li>
        </ul>
        <div class="sb v"><i class="ar up"></i><div class="track"><i class="thumb p70"></i></div><i class="ar dn"></i></div>
      </div>
    </div>
    <div class="step"><h3>第三步<span class="colon" lang="zh-TW">：</span>组织动作</h3>
      <div class="box">
        <ul class="tree cases organize">
          <li class="two"><svg class="tri"><use href="#tri"/></svg><svg class="case"><use href="#case"/></svg><span>用例 1<br>&nbsp;(If 动态面板状态 当前部件 = open)</span></li>
          <li class="act"><svg class="bolt"><use href="#bolt"/></svg>隐藏&nbsp;<q>panel_result 向上滑动 500 毫秒</q></li>
          <li class="act"><svg class="bolt"><use href="#bolt"/></svg>移动&nbsp;<q>radio_button 相对位置为 (-40,0) 线性</q></li>
          <li class="act sel"><svg class="bolt"><use href="#bolt"/></svg>设置&nbsp;<q>panel_control 到 close 淡入淡出 in 50</q></li>
        </ul>
        <div class="sb h"><i class="ar lt"></i><div class="track"><i class="thumb p87"></i></div><i class="ar rt"></i></div>
      </div>
    </div>
    <div class="step"><h3>第四步<span class="colon" lang="zh-TW">：</span>配置动作</h3>
      <div class="box config">
        <p>选择要设置状态的动态面板</p>
        <div class="searchrow"><input type="search" aria-label="搜索" placeholder="搜索"><label class="check"><input type="checkbox">隐藏未命名的</label></div>
        <div class="box inner">
          <ul class="tree targets">
            <li><label class="check"><input type="checkbox">当前部件</label></li>
            <li class="sel"><label class="check"><input type="checkbox" checked><span>设置panel_control (动态面板)状态到 <q>close 淡入淡出 in 500</q></span></label></li>
            <li class="par"><svg class="tri"><use href="#tri"/></svg><label class="check"><input type="checkbox">panel_result (动态面板)</label></li>
            <li class="l1"><label class="check"><input type="checkbox">panel_control2 (动态面板)</label></li>
            <li class="l1"><label class="check"><input type="checkbox">panel_control3 (动态面板)</label></li>
          </ul>
          <div class="sb h"><i class="ar lt"></i><div class="track"><i class="thumb p94"></i></div><i class="ar rt"></i></div>
        </div>
        <div class="cf pick"><label for="st">选择状态</label><span class="select gray"><select id="st"><option>close</option></select><svg class="caret"><use href="#caret"/></svg></span></div>
        <div class="cf anim"><label for="a1">进入时动画</label><span class="select gray w74"><select id="a1"><option>淡入淡出</option></select><svg class="caret"><use href="#caret"/></svg></span><label for="d1">用时</label><input id="d1" value="500"><span>毫秒</span></div>
        <div class="cf anim"><label for="a2">退出时动画</label><span class="select gray w74"><select id="a2"><option>无</option></select><svg class="caret"><use href="#caret"/></svg></span><label for="d2">用时</label><input id="d2" value="500" disabled><span>毫秒</span></div>
        <label class="check opt"><input type="checkbox">显示面板 (如果隐藏)</label>
        <label class="check opt"><input type="checkbox">展开/收起部件</label>
      </div>
    </div>
  </div>
  <footer><button class="glass primary">确定</button><button class="glass">取消</button></footer>
</section>
</body>
</html>
```
FILE: styles.css
```css
* { box-sizing: border-box; }
:root {
  --b: #0a9fdc; --g: #606060; --n: #76b900;
  --frame: #b8b8b8; --bar: #d2d2d2; --face: #f3f3f3; --line: #bcbcbc; --sel: #cbeaf7;
}
body {
  margin: 0; height: 100vh; overflow: hidden; display: flex; flex-direction: column;
  background: var(--frame); color: #222;
  font: 9px/15px "Liberation Sans", "Noto Sans CJK SC", sans-serif;
}
h1, h2, h3, h4, p, ul, fieldset { margin: 0; padding: 0; font-size: inherit; font-weight: normal; }
ul { list-style: none; }
button, input, select { font: inherit; color: inherit; margin: 0; padding: 0; border: 0; background: none; border-radius: 0; }
svg { display: block; flex: none; fill: #111; }
q { quotes: none; color: #0f8a1c; }
q::before, q::after { content: none; }
.sprite { position: absolute; width: 0; height: 0; }
.off { --b: #94c5d9; --g: #a9a9a9; --n: #bccd96; }
.i13 { width: 13px; height: 13px; }
.i14 { width: 14px; height: 14px; }
.tri { width: 7px; height: 7px; }
.tric { width: 7px; height: 8px; }
.caret { width: 5px; height: 3px; }

.titlebar { flex: 0 0 19px; background: #fff; border-bottom: 1px solid #ddd; display: flex; align-items: center; gap: 4px; padding-left: 2px; color: #999; }
.titlebar h1 { font: 10px/18px "Open Sans", "Noto Sans CJK SC", sans-serif; }
.wincontrols { margin-left: auto; display: flex; }
.wincontrols button { width: 37px; height: 18px; display: grid; place-items: center; }
.wincontrols svg { width: 9px; height: 9px; fill: none; stroke: #888; }
.menubar { flex: 0 0 19px; display: flex; gap: 11px; padding-left: 5px; }
.menubar button { font: 10px/19px "Open Sans", "Noto Sans CJK SC", sans-serif; color: #111; }

.toolbars { flex: 0 0 49px; display: flex; flex-direction: column; gap: 2px; font: 10px/15px "Open Sans", "Noto Sans CJK SC", sans-serif; }
.toolrow { display: flex; gap: 2px; height: 24px; }
.toolrow.second { height: 21px; }
.tools { background: var(--bar); display: flex; align-items: center; }
.tools button { width: 18px; height: 18px; display: grid; place-items: center; }
.tools button svg { width: 14px; height: 14px; }
.tools.wide button { width: 19px; }
.tools.wide button.on, .tools.wide button.on ~ button, .tools.wide i.sep ~ i.sep ~ button { width: 18px; }
.tools button.on { background: #dfe6f1; border: 1px solid #8fb6e4; }
.tools.off button.on, .tools button.off.on { background: #d6dbe3; border-color: #a8c4e6; }
.tools .caret { margin: 0 2px; }
.tools.off .caret, .glyph + .caret { fill: #8a8a8a; }
.grip { width: 2px; height: 80%; margin: 0 2px 0 3px; background: #b4b4b4; }
.tight .grip { margin: 0 0 0 3px; }
.sep { width: 1px; height: 70%; margin: 0 1px; background: #c4c4c4; }
.wide .sep { margin: 0 1px 0 2px; }
.second .sep { margin: 0 1px 0 2px; }
.brush { margin-right: 2px; }
.more { width: 6px; height: 6px; align-self: flex-end; margin: 0 2px 2px 4px; }
.select { position: relative; display: block; height: 15px; border: 1px solid #b5b5b5; background: #fff; }
.select select { appearance: none; display: block; width: 100%; height: 100%; padding: 0 10px 0 2px; line-height: 13px; opacity: 1; }
.select .caret { position: absolute; right: 3px; top: 50%; margin: -1px 0 0; pointer-events: none; }
.zoomsel { width: 45px; height: 18px; border: 0; margin-right: 4px; background: linear-gradient(90deg, #fff 36px, #dedede 36px); }
.zoomsel select { padding-left: 5px; }
.select.faded { height: 18px; border: 1px solid #c6c6c6; background: #d9d9d9; color: #adadad; margin-right: 3px; }
.select.faded .caret, .select.pale .caret { fill: #a0a0a0; }
.w28 { width: 28px; } .w36 { width: 36px; } .w74 { width: 74px; } .w79 { width: 79px; } .w114 { width: 114px; }
.w120 { width: 120px; } .w122 { width: 122px; } .w129 { width: 129px; } .w159 { width: 159px; }
.select.faded.w120, .select.faded.w36 { margin-right: 0; }
.glyph { font: 14px/16px "Liberation Serif", serif; color: #a5a5a5; }
.glyph.color b { border-bottom: 3px solid #a0a0a0; line-height: 12px; height: 14px; }
.coords > label { width: 16px; padding-left: 3px; }
.coords > input { width: 30px; height: 17px; background: #fff; padding-left: 4px; }
.coords > .check { width: auto; margin: 0 2px; }

.check { display: flex; align-items: center; gap: 5px; white-space: nowrap; }
input[type=checkbox] { appearance: none; flex: none; width: 11px; height: 11px; border: 1px solid #adadad; box-shadow: inset 0 0 0 1px #f0f0f0; background: linear-gradient(135deg, #c9ccd3, #f6f6f6); display: grid; place-items: center; }
input[type=checkbox]:checked::after { content: "✓"; font: bold 10px/9px "DejaVu Sans", sans-serif; color: #2a2a86; }
.coords .check { gap: 3px; }

.workspace { flex: 1; min-height: 0; display: grid; grid-template-columns: 149px 4px minmax(0, 1fr) 4px 220px; grid-template-rows: minmax(0, 1fr); }
.side { display: flex; flex-direction: column; gap: 4px; min-height: 0; min-width: 0; }
.panel { flex: 1 1 0; min-height: 0; background: var(--face); display: flex; flex-direction: column; overflow: hidden; }
.split { display: flex; align-items: center; }
.split i { width: 4px; height: 81px; background: #777; }
.phead { flex: 0 0 14px; background: var(--bar); display: grid; grid-template-columns: 38px 1fr 38px; text-align: center; line-height: 13px; white-space: nowrap; }
.phead h2 { grid-column: 2; }
.pbtns { display: flex; align-items: center; }
.pbtns button { flex: 1; display: grid; place-items: center; color: #666; font-weight: bold; line-height: 13px; }
.pbtns svg { width: 6px; height: 6px; }
.pbar { flex: 0 0 21px; background: var(--bar); display: flex; align-items: center; }
.pbar button { flex: 1; height: 18px; display: grid; place-items: center; }
.pbar button svg { width: 14px; height: 14px; }
.pbar .chev { flex: 0 0 12px; }
.pbar .chev svg { width: 7px; height: 9px; }
.pbar.mgr { padding-right: 83px; }
.pbar .on { background: var(--sel); border: 1px solid #3fb4e0; margin: 0 1px; min-width: 0; }
.pbar.lib { padding-left: 3px; gap: 6px; }
.pbar .text { flex: none; display: flex; align-items: center; gap: 4px; }
.pbar .text .caret { width: 5px; height: 3px; }
.pbar .text .i14 + .caret { margin-left: -2px; }
.white { background: #fff; }
.fill { flex: 1; }

.tree { min-width: 0; overflow: hidden; }
.tree li { display: flex; align-items: center; white-space: nowrap; min-width: 0; min-height: 0; }
.tree .sel { background: var(--sel); }
.page { width: 10px; height: 12px; }
.pages { flex: 1; background: #fff; display: grid; grid-template-rows: 15px 16px 15px 16px; }
.pages li { padding-left: 6px; }
.pages .tri { margin-right: 5px; }
.pages .page { margin-right: 7px; }
.pages .l2 { padding-left: 32px; }

.scroller { flex: 1; min-height: 0; display: flex; }
.scroller > :first-child { flex: 1; min-width: 0; overflow: hidden; }
.widgets h3, .props h3 { display: flex; align-items: center; font-weight: bold; font-size: 10px; }
.widgets h3 { padding: 3px 0 0 5px; gap: 4px; }
.widgets ul { display: grid; grid-template-columns: 67px 67px; grid-auto-rows: 60px; text-align: center; padding-top: 5px; }
.widgets .pic { height: 35px; display: flex; align-items: center; justify-content: center; font: bold 17px/35px "Liberation Sans", sans-serif; color: #666; }
.widgets .serif b { font: bold 20px/35px "Liberation Serif", serif; color: var(--b); }
.widgets .big { width: 23px; height: 23px; }
.widgets .para { position: relative; }
.widgets .para b { line-height: 28px; height: 35px; margin-right: 9px; }
.widgets .para svg { position: absolute; }
.widgets .rect { width: 23px; height: 17px; border: 1px solid #999; background: #fff; }
.widgets .cut .rect, .widgets .cut .round { display: block; margin: 10px auto 0; }
.widgets .cut .round { width: 10px; height: 10px; border-radius: 50%; background: #c9c9c9; margin-top: 7px; }
.widgets li:nth-child(odd) { padding-right: 1px; }

.sb { background: #ececec; display: flex; }
.sb.v { flex: 0 0 13px !important; flex-direction: column; }
.sb.h { flex: 0 0 13px; }
.track { flex: 1; display: flex; flex-direction: inherit; min-width: 0; min-height: 0; }
.thumb { border: 1px solid #999; border-radius: 1px; display: grid; place-items: center; }
.v .thumb { background: linear-gradient(90deg, #f4f4f4, #dcdcdc 50%, #c4c4c8 55%, #d6d6d8); }
.h .thumb { background: linear-gradient(#f4f4f4, #dcdcdc 50%, #c4c4c8 55%, #d6d6d8); }
.thumb::after { content: ""; width: 6px; height: 6px; }
.v .thumb::after { background: repeating-linear-gradient(#555 0 1px, transparent 1px 2px); }
.h .thumb::after { background: repeating-linear-gradient(90deg, #555 0 1px, transparent 1px 2px); }
.p3 { flex: 0 0 17px; } .p7 { flex: 0 0 7%; } .p24 { flex: 0 0 24%; } .p45 { flex: 0 0 45%; } .p48 { flex: 0 0 48%; }
.p70 { flex: 0 0 70%; } .p72 { flex: 0 0 72%; } .p78 { flex: 0 0 78%; } .p87 { flex: 0 0 87%; } .p94 { flex: 0 0 94%; }
.ar { flex: 0 0 13px; display: grid; place-items: center; }
.ar::after { content: ""; border: 2px solid transparent; }
.up::after { border-bottom: 3px solid #777; border-top: 0; }
.dn::after { border-top: 3px solid #777; border-bottom: 0; }
.lt::after { border-right: 3px solid #777; border-left: 0; }
.rt::after { border-left: 3px solid #777; border-right: 0; }

.center { display: flex; flex-direction: column; min-height: 0; min-width: 0; }
.tabstrip { flex: 0 0 13px; height: 13px; display: flex; align-items: center; padding: 0 5px 0 2px; line-height: 13px; }
.diagram { width: 13px; height: 10px; margin-right: 3px; }
.tab { height: 13px; background: #fff; display: flex; align-items: center; gap: 8px; padding: 0 7px 0 6px; }
.tab svg { width: 6px; height: 6px; opacity: .5; }
.tabstrip > .caret { width: 7px; height: 4px; margin-left: auto; fill: #666; }
.hruler, .vruler { background: #fff; font-size: 7px; }
.hruler text, .vruler text { fill: #333; }
.hruler { flex: 0 0 13px; width: 100%; height: 13px; }
.stage { flex: 1; min-height: 0; display: grid; grid-template: minmax(0, 1fr) 13px / 13px minmax(0, 1fr) 14px; }
.vruler { grid-row: 1 / 3; width: 13px; height: 100%; }
.canvas { background: #fff; overflow: hidden; }
.artboard { width: 520px; background: #f0f0f0; border: solid #d8d8d8; border-width: 0 1px 1px 0; display: grid; grid-template-rows: 114px 81px 41px 81px 81px 121px; }
.item { font-size: 26px; line-height: 77px; padding-left: 8px; color: #333; background: #fff; }
.item.first { grid-row: 2; line-height: 81px; }
.item.blue { grid-row: 4; background: #eff7fa; border-top: 1px solid #d5dde0; color: #4d5659; line-height: 76px; }
.item.blue + .item.blue { grid-row: 5; border-bottom: 1px solid #d5dde0; }
.corner { background: #e6e6e6; }
.hsplit { flex: 0 0 4px; display: grid; justify-content: center; }
.hsplit i { width: 81px; background: #777; }

.bottom { flex: 0 0 163px; background: var(--face); display: flex; flex-direction: column; min-height: 0; overflow: hidden; border-top: 1px solid #e2e2e2; margin-right: 1px; }
.btabs { flex: 0 0 20px; display: grid; grid-template-columns: 1fr 38px; align-items: start; background: linear-gradient(transparent 12px, #ccc 12px 13px, transparent 13px); }
.btabs .tabs { grid-column: 1 / 3; grid-row: 1; margin-top: 4px; }
.btabs .pbtns { grid-column: 2; grid-row: 1; height: 11px; }
.btabs .tabs button { width: 56px; }
.tabs { display: flex; justify-content: center; flex: none; }
.tabs button { width: 39px; height: 16px; line-height: 14px; background: #d0d0d0; border: 1px solid #bdbdbd; }
.tabs button.on { background: var(--sel); border-color: #3fb4e0; }
.tabs.line { background: linear-gradient(transparent 8px, #bbb 8px 9px, transparent 9px); padding-right: 1px; }
.tabs.second { margin: 5px 0 0; }
.bform { display: flex; align-items: flex-start; padding: 11px 0 0 12px; }
.rows { width: 212px; }
.row { display: flex; align-items: center; white-space: nowrap; }
.row > :first-child { flex: 0 0 64px; }
.r23 { height: 23px; } .r33 { height: 33px; } .r21 { height: 21px; }
.seg { display: flex; }
.seg button { width: 19px; height: 18px; background: #d0d0d0; border: 1px solid #c2c2c2; display: grid; place-items: center; }
.seg button.on { background: var(--sel); border-color: #3fb4e0; }
.seg .gray { --b: #999; --g: #bbb; --n: #ccc; }
.seg b { color: #666; font-size: 10px; }
.seg.bg { --fill: #fff; }
.seg .dd { width: 14px; }
.note { margin-left: 5px; }
.plain { display: grid; place-items: center; }
.row .plain { margin-left: 6px; }
.swatch { width: 29px; height: 29px; background: #fff; border: 1px solid #333; margin-right: 4px; }
.btn { background: #d2d2d2; border: 1px solid #bdbdbd; height: 18px; width: 40px; line-height: 14px; color: #111; }
.btn + .btn { margin-left: 4px; }
.btn:disabled { background: var(--face); color: #999; border-color: #ccc; }
.row .select { line-height: 13px; }
.row input:not([type=range]), .namebox input, .grid4 input, .caserow input, .searchrow input[type=search], .cf input { border: 1px solid #bdbdbd; background: #fff; padding-left: 2px; }
.row input.w28 { height: 16px; }
input:disabled { background: var(--face) !important; color: #999; }
fieldset { width: 192px; border: 1px solid #ccc; padding: 6px 6px 0; margin-top: 24px; }
legend { margin-left: 0; padding: 0 3px 0 0; line-height: 12px; }
.slider { margin-left: 4px; width: 79px; }
.slider input { appearance: none; display: block; width: 79px; height: 15px; background: linear-gradient(transparent 5px, #bbb 5px 6px, transparent 6px); }
.slider input::-webkit-slider-thumb { appearance: none; width: 9px; height: 15px; background: #eee; border: 1px solid #888; border-radius: 1px 1px 4px 4px; }
.slider i { display: block; height: 3px; margin: 0 0 0 4px; background: repeating-linear-gradient(90deg, #ccc 0 1px, transparent 1px 7px); }

.namebox { padding: 3px 4px 5px; color: #111; font-weight: bold; }
.namebox label { display: block; font-weight: normal; }
.namebox input { width: 100%; height: 17px; display: block; font-size: 10px; font-weight: normal; }
.links { padding: 3px 8px 2px; display: flex; gap: 4px; }
a { color: #1b7fb8; text-decoration: none; }
.cases li { padding-left: 6px; line-height: 15px; min-height: 15px; }
.cases .tri { margin-right: 4px; }
.click { width: 13px; height: 13px; margin-right: 5px; }
.case { width: 12px; height: 13px; margin-right: 5px; align-self: flex-start; margin-top: 1px; }
.cases .l1 { padding-left: 20px; }
.cases .l1 .case, .cases .two .case { margin-right: 6px; }
.cases .two { line-height: 12px; min-height: 25px; }
.cases .two span { flex: 1; }
.cases .two .tri { align-self: flex-start; margin-top: 4px; }
.cases .two > .caret { align-self: flex-start; margin: 6px 5px 0 0; width: 7px; height: 4px; fill: #777; }
.cases .act { padding-left: 47px; height: 15px; overflow: hidden; }
.cases .act:nth-child(3) { margin-bottom: 1px; }
.bolt { width: 10px; height: 12px; margin-right: 7px; }
.sb.short { margin-right: 13px; }

.props { padding: 4px 4px 0; }
.props h3 { gap: 5px; height: 16px; padding-left: 1px; }
.props h4 { padding-left: 8px; line-height: 16px; font-weight: bold; }
.grid4 { display: grid; grid-template-columns: 35px 34px 43px 34px; grid-auto-rows: 16px; row-gap: 3px; padding-left: 8px; }
.grid4 label { padding-top: 2px; }
.grid4 label:nth-child(4n+3) { padding-left: 9px; }
.dim { color: #888; }
.hid { margin: 6px 0 0 10px; height: 16px; }
hr { border: 0; border-top: 1px solid #c4c4c4; margin: 5px 0 4px; }
.line1 { display: flex; gap: 7px; padding: 5px 0 3px 8px; }
.line1 + .line1 { padding-top: 1px; }
.select.pale { background: var(--face); border-color: #c8c8c8; color: #999; }

.manager { flex: none; height: 185px; display: grid; grid-template-rows: repeat(12, 1fr); }
.manager li { padding-left: 6px; }
.manager .root { padding-left: 3px; }
.manager .root .page { margin-right: 7px; }
.manager .tri { margin-right: 4px; }
.stack { width: 13px; height: 13px; margin-right: 5px; }
.state { width: 13px; height: 6px; margin-right: 5px; }
.manager .l1 { padding-left: 20px; } .manager .l2 { padding-left: 35px; } .manager .l3 { padding-left: 49px; }
.vis { margin: 0 4px 0 auto; width: 11px; height: 11px; border: 1px solid #bbb; background: var(--b); box-shadow: inset 0 0 0 2px #f3f3f3; }

.taskbar { flex: 0 0 7px; background: #2d0045; display: flex; overflow: hidden; color: #fff; }
.taskbar i { width: 39px; margin-left: 278px; background: #5f1590; }
.taskbar time { margin-left: auto; padding: 5px 18px 0 0; border-right: 1px solid #55406a; margin-right: 3px; line-height: 10px; font-size: 10px; }

.dialog { position: absolute; top: 186px; left: 0; right: 0; margin: 0 auto; width: 708px; background: var(--face); border: 1px solid #b48fcd; box-shadow: 2px 4px 14px rgba(0, 0, 0, .4); font-size: 10px; }
.dialog > header { background: #fff; height: 25px; display: flex; align-items: center; padding: 0 8px 0 6px; gap: 4px; }
.dialog > header .plain { margin-left: auto; }
.dialog > header .plain svg { width: 9px; height: 9px; fill: none; stroke: #333; }
.caserow { display: flex; align-items: center; height: 34px; padding-left: 7px; }
.caserow label { width: 60px; }
.caserow input { width: 244px; height: 16px; margin-right: 12px; font-size: 9px; }
.caserow .btn { width: 60px; font-size: 9px; }
.caserow .btn + .btn { margin-left: 8px; }
.steps { display: grid; grid-template-columns: 179px 220px minmax(0, 1fr); gap: 8px; padding: 0 8px 0 7px; }
.step { min-width: 0; }
.step h3 { height: 20px; line-height: 16px; }
.colon { font-family: "Noto Sans CJK TC", sans-serif; }
.box { border: 1px solid #bdbdbd; background: #fff; height: 355px; display: flex; flex-direction: column; font-size: 9px; min-width: 0; }
.box.hor { flex-direction: row; }
.box > .tree { flex: 1; }
.actions { display: grid; grid-template-rows: repeat(23, minmax(0, 1fr)); line-height: 15px; }
.actions li { padding-left: 6px; }
.actions .tri { margin-right: 9px; }
.actions .tric { margin-right: 9px; margin-left: 1px; }
.actions .l1 { padding-left: 20px; }
.actions .l2 { padding-left: 37px; } .actions .l3 { padding-left: 51px; }
.actions .l1 .tri { margin-right: 10px; }
.organize .act { padding-left: 32px; }
.config { padding: 0 4px 0 3px; font-size: 10px; }
.config p { height: 20px; line-height: 19px; }
.searchrow { display: flex; align-items: center; height: 16px; gap: 7px; font-size: 9px; }
.searchrow input[type=search] { width: 186px; height: 16px; appearance: none; }
.searchrow input::placeholder { font-style: italic; color: #888; }
.box.inner { height: 189px; margin: 3px 0 8px; }
.targets { padding: 0 2px 0 0; }
.targets li { height: 15px; margin-bottom: 1px; padding-left: 19px; overflow: hidden; }
.targets li:nth-child(2n) { margin-bottom: 0; }
.targets .check { gap: 7px; }
.targets .par { padding-left: 6px; }
.targets .par .tri { margin-right: 6px; }
.targets .l1 { padding-left: 34px; }
.cf { display: flex; align-items: center; height: 18px; padding-left: 4px; margin-bottom: 4px; white-space: nowrap; }
.cf.pick { margin-bottom: 8px; }
.cf .select { height: 18px; }
.cf .select.gray { background: #d0d0d0; border-color: #bdbdbd; }
.cf .select select { padding-left: 5px; line-height: 16px; }
.cf.pick .select { flex: 1; margin: 0 3px 0 4px; }
.cf label:first-child { width: 69px; }
.cf.pick label:first-child { width: 40px; }
.cf .select .caret { width: 7px; height: 4px; }
.anim .select + label { width: 32px; padding-left: 7px; }
.cf input { width: 41px; height: 18px; margin-right: 2px; }
.check.opt { padding-left: 7px; height: 16px; margin-top: 5px; }
.cf + .check.opt { margin-top: 3px; }
.dialog > footer { display: flex; justify-content: flex-end; gap: 4px; padding: 8px 8px 5px; }
.glass { width: 61px; height: 19px; line-height: 15px; border: 1px solid #8a8a8a; border-radius: 2px; background: linear-gradient(#f2f2f2, #e4e4e4 50%, #d2d2d2 50%, #cfcfcf); box-shadow: inset 0 0 0 1px #fafafa; color: #111; }
.glass.primary { border-color: #1f9fd0; box-shadow: inset 0 0 0 1px #5cd0f4; background: linear-gradient(#eef5f9, #dcebf3 50%, #c2dcea 50%, #cbe0ec); }
```
